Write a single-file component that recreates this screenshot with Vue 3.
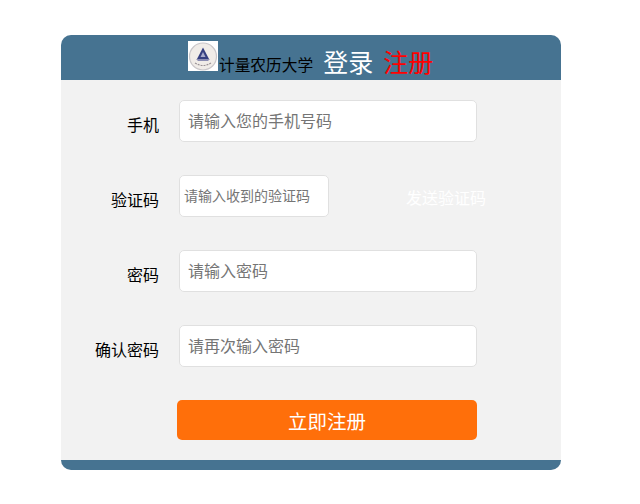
<script setup>
const rows = [
  { label: '手机', placeholder: '请输入您的手机号码' },
  { label: '验证码', placeholder: '请输入收到的验证码', code: true },
  { label: '密码', placeholder: '请输入密码' },
  { label: '确认密码', placeholder: '请再次输入密码' },
]
</script>

<template>
  <div class="page">
    <div class="card">
      <header class="head">
        <svg class="logo" viewBox="0 0 30 30" width="30" height="30">
          <rect width="30" height="30" fill="#fff" />
          <ellipse cx="15" cy="15.5" rx="13.5" ry="13.5" fill="#f0ece8" stroke="#c9c6c9" stroke-width="1.2" />
          <path d="M15 6.5 L21 18 H9 Z" fill="#353f80" />
          <path d="M15 11 L17.5 16 H12.5 Z" fill="#a7aacb" />
          <path d="M8 18 H22 L20 20 H10 Z" fill="#8b8db3" />
          <path d="M7 22 Q15 27 23 22" fill="none" stroke="#9a9296" stroke-width="1.2" stroke-dasharray="2 1" />
        </svg>
        <span class="school">计量农历大学</span>
        <a class="tab login">登录</a>
        <a class="tab reg">注册</a>
      </header>
      <main class="body">
        <div v-for="r in rows" :key="r.label" class="row">
          <label class="label">{{ r.label }}</label>
          <input class="input" :class="{ short: r.code }" :placeholder="r.placeholder" />
          <span v-if="r.code" class="send">发送验证码</span>
        </div>
        <button class="submit">立即注册</button>
      </main>
      <footer class="foot"></footer>
    </div>
  </div>
</template>

<style>
body { margin: 0; background: #fff; }
</style>

<style scoped>
.page {
  width: 640px;
  height: 504px;
  padding: 35px 0 0 61px;
  box-sizing: border-box;
  font-family: "Noto Sans CJK SC", sans-serif;
}
.card {
  width: 500px;
  height: 435px;
  display: flex;
  flex-direction: column;
  border-radius: 10px;
  overflow: hidden;
  background: #f2f2f2;
}
.head {
  height: 45px;
  flex: none;
  background: #467391;
  display: flex;
  align-items: flex-start;
  padding-left: 127px;
  box-sizing: border-box;
}
.logo { margin-top: 6px; flex: none; }
.school {
  margin: 1px 0 0 1px;
  padding-top: 17px;
  font-size: 15.7px;
  line-height: 24px;
  color: #000;
}
.tab { font-size: 25px; line-height: 32px; margin-top: 10px; }
.login { color: #fff; margin-left: 10px; }
.reg { color: #f00; margin-left: 10px; }
.body {
  flex: 1;
  padding-top: 20px;
  display: flex;
  flex-direction: column;
  gap: 33px;
  box-sizing: border-box;
}
.row { display: flex; align-items: flex-start; height: 42px; }
.label {
  width: 98px;
  flex: none;
  text-align: right;
  font-size: 16px;
  line-height: 48px;
  color: #000;
}
.input {
  margin-left: 20px;
  width: 298px;
  height: 42px;
  box-sizing: border-box;
  padding: 0 8px 2px;
  background: #fff;
  border: 1px solid #e0e0e0;
  border-radius: 5px;
  font-family: inherit;
  font-size: 16px;
  outline: none;
}
.input::placeholder { color: #757575; opacity: 1; }
.input.short { width: 150px; padding: 0 4px 2px; font-size: 14px; }
.send {
  margin-left: 77px;
  font-size: 16px;
  line-height: 44px;
  color: #fff;
  white-space: nowrap;
}
.submit {
  margin: 0 0 0 116px;
  width: 300px;
  height: 40px;
  border: 0;
  border-radius: 5px;
  background: #ff6f0a;
  color: #fff;
  font-family: inherit;
  font-size: 19.5px;
  padding: 0;
  flex: none;
}
.foot { height: 10px; flex: none; background: #467391; }
</style>
